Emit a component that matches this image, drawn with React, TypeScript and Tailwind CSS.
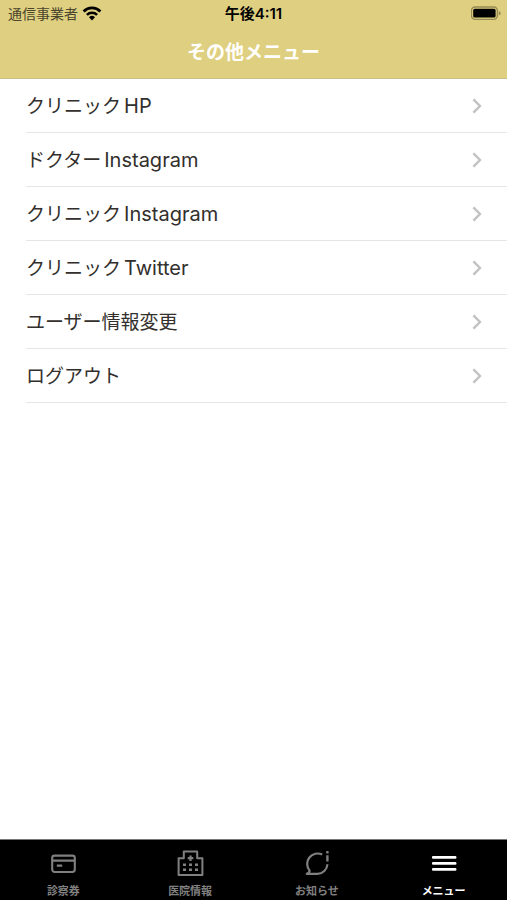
import type { ReactNode } from "react"

const menuItems = [
  { name: "クリニック", suffix: "HP" },
  { name: "ドクター", suffix: "Instagram" },
  { name: "クリニック", suffix: "Instagram" },
  { name: "クリニック", suffix: "Twitter" },
  { name: "ユーザー情報変更" },
  { name: "ログアウト" },
]

function WifiIcon() {
  return (
    <svg className="w-5 h-4" viewBox="0 0 20 16" fill="none" stroke="currentColor" aria-hidden="true">
      <path d="M1.6 5.4a12 12 0 0 1 16.8 0" strokeWidth="2.8" />
      <path d="M4.9 8.9a7.3 7.3 0 0 1 10.2 0" strokeWidth="2.6" />
      <path d="M10 14.4l-3-3.1a4.3 4.3 0 0 1 6 0z" fill="currentColor" stroke="none" />
    </svg>
  )
}

function BatteryIcon() {
  return (
    <svg className="w-8 h-4" viewBox="0 0 32 16" aria-hidden="true">
      <rect x="0.4" y="1" width="26" height="12.4" rx="3.8" fill="none" stroke="#958b55" strokeWidth="1.4" />
      <rect x="2.2" y="2.8" width="22.4" height="8.8" rx="1.6" fill="#000" />
      <path d="M27.8 5v4.6q1.9-.8 1.9-2.3t-1.9-2.3z" fill="#958b55" />
    </svg>
  )
}

function ChevronIcon() {
  return (
    <svg className="w-4 h-4" viewBox="0 0 16 16" fill="none" stroke="#c2c2c2" strokeWidth="2.4" aria-hidden="true">
      <path d="M4.4 1.4l6.6 6.6-6.6 6.6" />
    </svg>
  )
}

function CardIcon() {
  return (
    <svg className="w-7 h-7" viewBox="0 0 28 28" fill="none" stroke="currentColor" strokeWidth="2.1" aria-hidden="true">
      <rect x="3.2" y="5.6" width="22.6" height="16.4" rx="2.4" />
      <path d="M3.2 10.6h22.6M7.8 15.6h5.4" />
    </svg>
  )
}

function HospitalIcon() {
  return (
    <svg className="w-7 h-7" viewBox="0 0 28 28" fill="none" stroke="currentColor" strokeWidth="2" aria-hidden="true">
      <path d="M2.6 25V8.2h5.2V1.6h13.4v6.6h5.2V25z" strokeLinejoin="round" />
      <path d="M14.5 5.4v5.6M11.7 8.2h5.6" strokeWidth="2.2" />
      <path d="M7 14.8h3M13 14.8h3M19 14.8h3M7 19.8h3M13 19.8h3M19 19.8h3" strokeWidth="2.4" />
    </svg>
  )
}

function NoticeIcon() {
  return (
    <svg className="w-7 h-7" viewBox="0 0 28 28" fill="none" stroke="currentColor" strokeWidth="2.2" aria-hidden="true">
      <path d="M19.2 4.6A10.4 10.4 0 0 0 6.6 20.6Q6.4 23 3.8 23.9H14.4A10.2 10.2 0 0 0 24.4 14.2" strokeLinejoin="round" />
      <path d="M24.4 1v2.4M24.4 5.2v6.4" strokeWidth="2.4" />
    </svg>
  )
}

function MenuIcon() {
  return (
    <svg className="w-7 h-7" viewBox="0 0 28 28" fill="none" stroke="currentColor" strokeWidth="2.6" strokeLinecap="round" aria-hidden="true">
      <path d="M3.2 7.4h22M3.2 13.4h22M3.2 19.4h22" />
    </svg>
  )
}

const tabs: { label: string; icon: ReactNode; active?: boolean }[] = [
  { label: "診察券", icon: <CardIcon /> },
  { label: "医院情報", icon: <HospitalIcon /> },
  { label: "お知らせ", icon: <NoticeIcon /> },
  { label: "メニュー", icon: <MenuIcon />, active: true },
]

export default function App() {
  return (
    <div className="min-h-screen flex flex-col bg-white font-['Inter','Noto_Sans_CJK_JP',sans-serif]">
      <header className="bg-[#dfcf80] border-b border-[#c9bf88]">
        <div className="grid grid-cols-3 items-center h-7 px-1 text-sm text-black">
          <div className="flex items-center gap-1 pl-1 text-[#4a452c]">
            <span>通信事業者</span>
            <span className="text-black">
              <WifiIcon />
            </span>
          </div>
          <div className="text-center text-[15px] font-semibold">午後4:11</div>
          <div className="flex justify-end">
            <BatteryIcon />
          </div>
        </div>
        <h1 className="h-[50px] flex items-center justify-center pt-px text-[19px] font-bold text-white">その他メニュー</h1>
      </header>

      <main className="flex-1">
        <ul className="pl-[26px]">
          {menuItems.map((item) => (
            <li key={item.name + item.suffix} className="border-b border-[#e6e6e8]">
              <button type="button" className="w-full h-[53px] pr-[22px] flex items-center justify-between text-[#322f2c]">
                <span className="flex items-baseline gap-[3px] pt-0.5 text-[19px] leading-7">
                  {item.name}
                  {item.suffix && <span className="text-xl">{item.suffix}</span>}
                </span>
                <ChevronIcon />
              </button>
            </li>
          ))}
        </ul>
      </main>

      <nav className="grid grid-cols-4 h-[61px] bg-black border-t border-[#777]">
        {tabs.map((tab) => (
          <button
            key={tab.label}
            type="button"
            className={`flex flex-col items-center pt-[10px] gap-[5px] text-[11px] leading-4 font-bold ${tab.active ? "text-white" : "text-[#808080]"}`}
          >
            {tab.icon}
            <span>{tab.label}</span>
          </button>
        ))}
      </nav>
    </div>
  )
}
